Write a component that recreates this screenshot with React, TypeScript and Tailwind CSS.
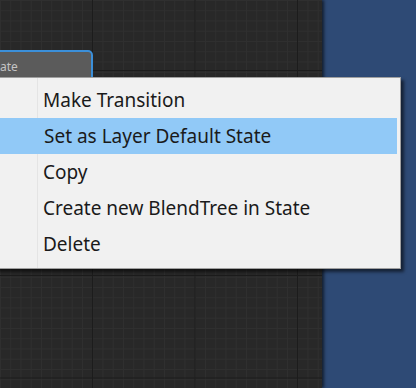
import React from 'react';

const items = [
  'Make Transition',
  'Set as Layer Default State',
  'Copy',
  'Create new BlendTree in State',
  'Delete',
];

const App: React.FC = () => {
  return (
    <div className="relative w-[416px] h-[388px] overflow-hidden flex bg-[#2e4a75] font-['Noto_Sans','Liberation_Sans',sans-serif]">
      {/* graph canvas */}
      <div className="relative w-[322px] h-full bg-[#282828] bg-[linear-gradient(to_right,#1c1c1c_1px,transparent_1px),linear-gradient(to_bottom,#1c1c1c_1px,transparent_1px),linear-gradient(to_right,#2f2f2f_1px,transparent_1px),linear-gradient(to_bottom,#2f2f2f_1px,transparent_1px)] bg-[size:102.5px_102.5px,102.5px_102.5px,10.25px_10.25px,10.25px_10.25px] bg-[position:92px_70px,92px_70px,0px_0px,0px_0px] shadow-[2px_0_3px_rgba(0,0,0,0.6)]">
        {/* state node, mostly hidden behind the menu */}
        <div className="absolute left-[-60px] top-[50px] w-[153px] h-[40px] rounded-t-[5px] border-2 border-[#3b8fd9] bg-[#5b5b5b]">
          <span className="absolute left-[47px] top-[6px] text-[12px] text-[#c4c4c4]">State</span>
        </div>
      </div>

      {/* context menu */}
      <div className="absolute left-[-30px] top-[77px] w-[431px] h-[192px] bg-[#f1f1f1] border border-[#a0a0a0] shadow-[3px_3px_3px_rgba(0,0,0,0.55)] pt-[4px] pr-[3px]">
        <div className="absolute left-[66px] top-0 bottom-0 w-px bg-[#e4e4e4]" />
        {items.map((label, i) => (
          <div
            key={label}
            className={`relative h-[36px] flex items-center pl-[72px] text-[19px] text-[#1a1a1a] ${
              i === 1 ? 'bg-[#91c9f7] border border-[#91c9f7]' : ''
            }`}
          >
            {label}
          </div>
        ))}
      </div>
    </div>
  );
};

export default App;
